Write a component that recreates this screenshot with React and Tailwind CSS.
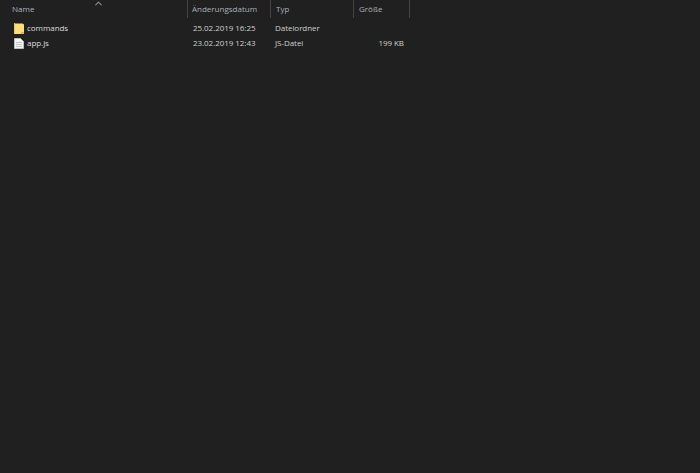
import { ChevronUp } from "lucide-react";

const font = { fontFamily: '"Open Sans", sans-serif' };

function FolderIcon() {
  return (
    <svg width="10" height="11" viewBox="0 0 10 11" className="mt-px shrink-0">
      <path d="M0 0.5 H8.5 L10 1.5 V11 H0 Z" fill="#fbdc7f" />
      <path d="M0 0 H1 V11 H0 Z" fill="#f0c95c" />
      <path d="M7 11 V9 H10 V11 Z" fill="#e0b94f" />
    </svg>
  );
}

function FileIcon() {
  return (
    <svg width="10" height="11" viewBox="0 0 10 11" className="mt-px shrink-0">
      <path d="M0.5 0.5 H6.5 L9.5 3.5 V10.5 H0.5 Z" fill="#f4f4f4" stroke="#bdbdbd" />
      <path d="M2 4.5 H8 M2 6.5 H8 M2 8.5 H8" stroke="#c4c4c4" />
    </svg>
  );
}

function HeaderCell({ label, className }) {
  return (
    <div className={`flex h-[18px] items-center border-r border-[#444444] ${className}`}>
      <span className="text-[8px] leading-none text-[#a9b1bb]">{label}</span>
    </div>
  );
}

function Row({ icon, name, date, type, size }) {
  return (
    <div className="flex h-[15px] items-center text-[8px] leading-none tracking-[-0.05px] text-[#cfcfcf]">
      <div className="flex w-[188px] items-center gap-[3px] pl-[14px] text-[#dcdcdc]">
        {icon}
        <span>{name}</span>
      </div>
      <div className="w-[83px] pl-[5px]">{date}</div>
      <div className="w-[83px] pl-[4px]">{type}</div>
      <div className="w-[50px] text-right">{size}</div>
    </div>
  );
}

export default function App() {
  return (
    <div className="h-[473px] w-[700px] overflow-hidden bg-[#202020]" style={font}>
      <div className="relative flex">
        <ChevronUp size={11} strokeWidth={2.5} className="absolute left-[93px] top-[-2px] text-[#8a8a8a]" />
        <HeaderCell label="Name" className="w-[188px] pl-[12px]" />
        <HeaderCell label="Änderungsdatum" className="w-[83px] pl-[4px]" />
        <HeaderCell label="Typ" className="w-[83px] pl-[5px]" />
        <HeaderCell label="Größe" className="w-[56px] pl-[5px]" />
      </div>
      <div className="mt-[2px]">
        <Row icon={<FolderIcon />} name="commands" date="25.02.2019 16:25" type="Dateiordner" size="" />
        <Row icon={<FileIcon />} name="app.js" date="23.02.2019 12:43" type="JS-Datei" size="199 KB" />
      </div>
    </div>
  );
}
